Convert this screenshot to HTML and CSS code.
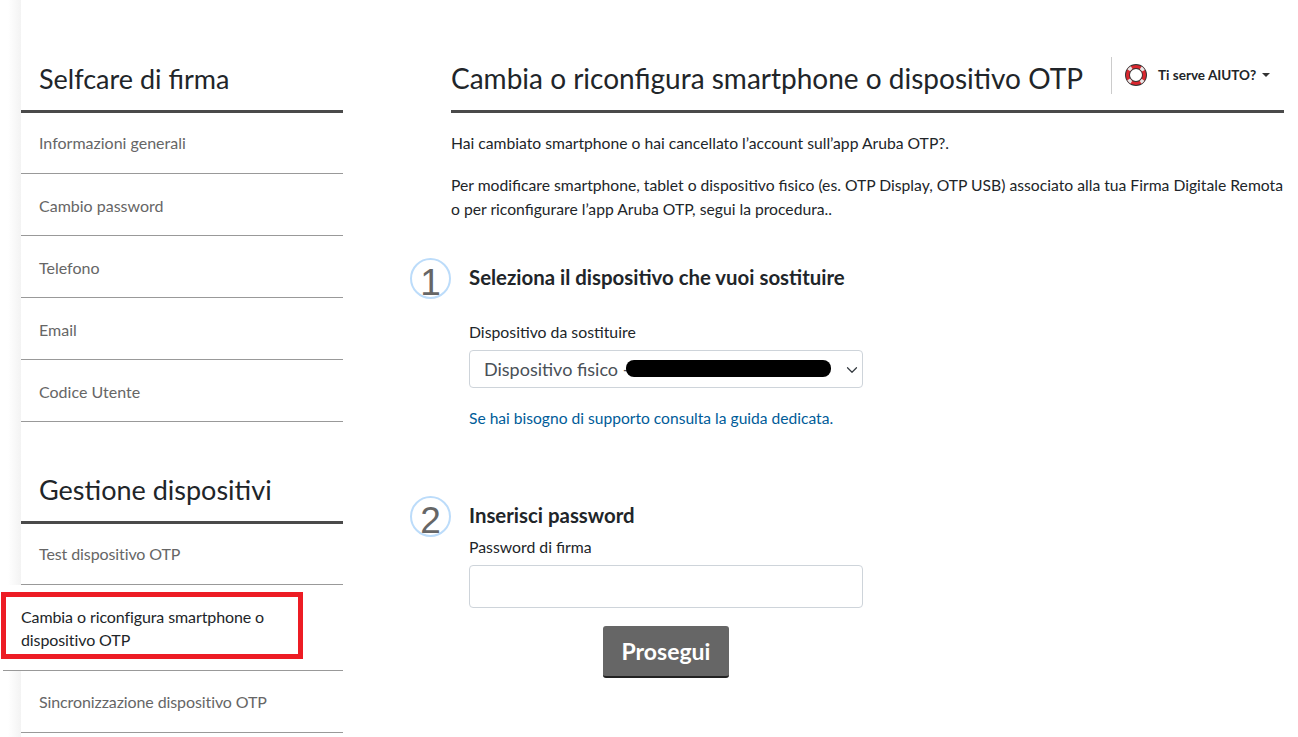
FILE: index.html
```html
<!DOCTYPE html>
<html lang="it">
  <head>
    <meta charset="UTF-8" />
    <meta name="viewport" content="width=device-width, initial-scale=1.0" />
    <title>Cambia o riconfigura smartphone o dispositivo OTP</title>
    <link rel="stylesheet" href="styles.css">
  </head>
  <body>
    <div class="page">
      <aside class="sidebar">
        <h2 class="side-title">Selfcare di firma</h2>
        <ul class="side-list">
          <li><a href="#">Informazioni generali</a></li>
          <li><a href="#">Cambio password</a></li>
          <li><a href="#">Telefono</a></li>
          <li><a href="#">Email</a></li>
          <li><a href="#">Codice Utente</a></li>
        </ul>

        <h2 class="side-title second">Gestione dispositivi</h2>
        <ul class="side-list tight">
          <li><a href="#">Test dispositivo OTP</a></li>
          <li class="active"><a href="#">Cambia o riconfigura smartphone o dispositivo OTP</a></li>
          <li><a href="#">Sincronizzazione dispositivo OTP</a></li>
        </ul>
        <div class="highlight"></div>
      </aside>

      <main class="content">
        <header class="content-head">
          <h1>Cambia o riconfigura smartphone o dispositivo OTP</h1>
          <div class="help">
            <svg class="help-icon" width="24" height="24" viewBox="0 0 24 24">
              <circle cx="12" cy="12" r="8.5" fill="none" stroke="#333" stroke-width="5"/>
              <circle cx="12" cy="12" r="8.5" fill="none" stroke="#d9282f" stroke-width="3.2"/>
              <circle cx="12" cy="12" r="8.5" fill="none" stroke="#e8e8e8" stroke-width="3.2" stroke-dasharray="4 9.35" stroke-dashoffset="2" transform="rotate(45 12 12)"/>
            </svg>
            <span>Ti serve AIUTO?</span>
            <i class="caret"></i>
          </div>
        </header>

        <p class="intro">Hai cambiato smartphone o hai cancellato l’account sull’app Aruba OTP?.</p>
        <p class="intro">Per modificare smartphone, tablet o dispositivo fisico (es. OTP Display, OTP USB) associato alla tua Firma Digitale Remota o per riconfigurare l’app Aruba OTP, segui la procedura..</p>

        <section class="step step-one">
          <div class="step-num">1</div>
          <div class="step-body">
            <h3>Seleziona il dispositivo che vuoi sostituire</h3>
            <label class="first-label" for="device">Dispositivo da sostituire</label>
            <div class="select-wrap">
              <select id="device">
                <option>Dispositivo fisico -</option>
              </select>
              <span class="redacted"></span>
              <svg class="chevron" width="12" height="12" viewBox="0 0 16 16">
                <path d="M2 5l6 6 6-6" fill="none" stroke="#343a40" stroke-width="1.6" stroke-linecap="round" stroke-linejoin="round"/>
              </svg>
            </div>
            <p class="guide"><a href="#">Se hai bisogno di supporto consulta la guida dedicata.</a></p>
          </div>
        </section>

        <section class="step step-two">
          <div class="step-num">2</div>
          <div class="step-body">
            <h3>Inserisci password</h3>
            <label class="second-label" for="pwd">Password di firma</label>
            <input id="pwd" type="password" />
            <div class="actions">
              <button class="btn">Prosegui</button>
            </div>
          </div>
        </section>
      </main>
    </div>
  </body>
</html>
```

FILE: styles.css
```css
* {
  box-sizing: border-box;
}

html,
body {
  margin: 0;
  height: 737px;
  overflow: hidden;
  background: #fff;
}

body {
  color: #212529;
  font-family: Lato, sans-serif;
  font-size: 16px;
}

.page {
  display: flex;
  height: 737px;
  padding-right: 14px;
}

/* sidebar */
.sidebar {
  position: relative;
  flex: none;
  width: 343px;
  padding: 60px 0 0 21px;
  background: linear-gradient(to right, #fff 0, #fff 8px, #f3f3f3 21px, #fff 21px);
}

.side-title {
  margin: 0;
  height: 53px;
  padding: 0 0 0 18px;
  border-bottom: 3px solid #4a4a4a;
  font-size: 27px;
  font-weight: 400;
  line-height: 38px;
  color: #212529;
}

.side-title.second {
  margin-top: 49px;
  height: 53px;
}

.side-list {
  margin: 0;
  padding: 0;
  list-style: none;
}

.side-list li {
  height: 62px;
  padding: 0 0 0 18px;
  border-bottom: 1px solid #999;
  line-height: 64px;
}

.side-list li:first-child {
  height: 61px;
  line-height: 60px;
}

.side-list.tight {
  letter-spacing: -0.1px;
}

.side-list.tight li:last-child {
  line-height: 62px;
}

.side-list a {
  color: #666;
  text-decoration: none;
}

.side-list .active {
  position: relative;
  height: 86px;
  margin-left: -18px;
  padding: 20px 30px 0 0;
  background: #fff;
  line-height: 23px;
}

.side-list .active a {
  display: block;
  width: 260px;
  margin-left: 18px;
  color: #212529;
}

/* red box drawn over the selected item */
.highlight {
  position: absolute;
  left: 1px;
  top: 592px;
  width: 302px;
  height: 67px;
  border: 5px solid #ed1c24;
}

/* main column */
.content {
  flex: 1;
  min-width: 0;
  margin-left: 108px;
  padding-top: 57px;
}

.content-head {
  display: flex;
  justify-content: space-between;
  height: 56px;
  border-bottom: 3px solid #4a4a4a;
  margin-bottom: 18px;
}

.content-head h1 {
  margin: 0;
  font-size: 28px;
  font-weight: 400;
  line-height: 42px;
  white-space: nowrap;
}

.help {
  display: flex;
  align-items: center;
  width: 173px;
  height: 37px;
  border-left: 1px solid #ccc;
  padding-left: 12px;
  padding-bottom: 1px;
  font-size: 13.5px;
  font-weight: 700;
  color: #212529;
}

.help-icon {
  margin-right: 10px;
}

.caret {
  margin-left: 6px;
  border-top: 4px solid #333;
  border-left: 4px solid transparent;
  border-right: 4px solid transparent;
}

.intro {
  margin: 0 0 18px;
  font-size: 15.7px;
  line-height: 24px;
}

.step {
  display: flex;
  margin-left: -41px;
}

.step-one {
  margin-top: 37px;
}

.step-two {
  margin-top: 66px;
}

.step-num {
  flex: none;
  width: 41px;
  height: 41px;
  border: 2px solid #bcdcfa;
  border-radius: 50%;
  font-family: "Liberation Sans", Arial, sans-serif;
  font-size: 37px;
  line-height: 45px;
  text-align: center;
  color: #666;
}

.step-body {
  width: 394px;
  margin-left: 18px;
}

.step h3 {
  margin: 5px 0 0;
  font-size: 20.4px;
  font-weight: 700;
  line-height: 28px;
}

label {
  display: block;
  font-size: 15.8px;
  line-height: 24px;
}

.first-label {
  margin-top: 29px;
}

.second-label {
  margin-top: 6px;
}

.select-wrap {
  position: relative;
  margin-top: 6px;
}

select {
  display: block;
  width: 100%;
  height: 38px;
  padding: 0 14px;
  appearance: none;
  background: #fff;
  border: 1px solid #ced4da;
  border-radius: 4px;
  font-family: inherit;
  font-size: 18px;
  color: #495057;
}

.redacted {
  position: absolute;
  left: 157px;
  top: 10px;
  width: 205px;
  height: 17px;
  border-radius: 8px;
  background: #000;
}

.chevron {
  position: absolute;
  right: 5px;
  top: 14px;
}

.guide {
  margin: 18px 0 0;
  font-size: 15.6px;
  line-height: 24px;
}

.guide a {
  color: #005c99;
  text-decoration: none;
}

input {
  display: block;
  width: 100%;
  height: 43px;
  margin-top: 6px;
  border: 1px solid #ced4da;
  border-radius: 4px;
  background: #fff;
}

.actions {
  margin-top: 18px;
  padding-left: 134px;
}

.btn {
  width: 126px;
  height: 52px;
  padding: 0;
  border: none;
  border-bottom: 2px solid #222;
  border-radius: 3px;
  background: #666;
  font-family: inherit;
  font-size: 23px;
  font-weight: 700;
  color: #fff;
}
```
